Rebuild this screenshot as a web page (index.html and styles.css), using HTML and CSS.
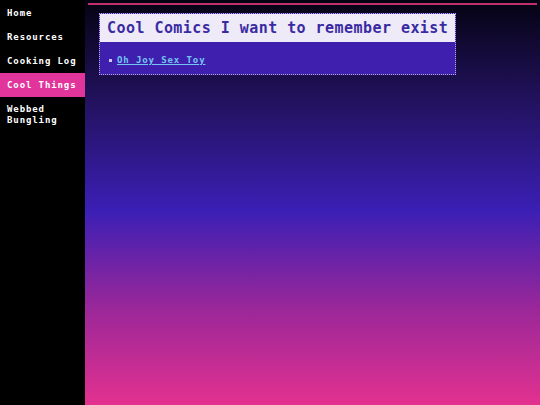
FILE: index.html
```html
<!DOCTYPE html>
<html>
<head>
<meta charset="utf-8">
<link rel="stylesheet" href="styles.css">
</head>
<body>
<nav class="sidebar">
  <a class="nav-item" href="#">Home</a>
  <a class="nav-item" href="#">Resources</a>
  <a class="nav-item" href="#">Cooking Log</a>
  <a class="nav-item active" href="#">Cool Things</a>
  <a class="nav-item" href="#">Webbed Bungling</a>
</nav>
<main class="main">
  <div class="rule-wrap">
    <section class="card">
      <h2 class="card-title">Cool Comics I want to remember exist</h2>
      <ul class="card-list">
        <li><a href="#">Oh Joy Sex Toy</a></li>
      </ul>
    </section>
  </div>
</main>
</body>
</html>
```
FILE: styles.css
```css
html, body {
  margin: 0;
  padding: 0;
  height: 100%;
}
body {
  display: flex;
  min-height: 405px;
  font-family: "DejaVu Sans Mono", "Liberation Mono", monospace;
  background: #000;
}
.sidebar {
  width: 85px;
  flex: none;
  background: #000;
  display: flex;
  flex-direction: column;
  padding-top: 1px;
}
.nav-item {
  display: block;
  color: #fff;
  text-decoration: none;
  font-size: 9px;
  font-weight: bold;
  line-height: 11px;
  letter-spacing: 0.9px;
  padding: 7px 7px 6px;
}
.nav-item.active {
  background: #e1359b;
}
.main {
  flex: 1;
  padding: 3px 3px 0;
  background: linear-gradient(to bottom, #050312 0%, #22125e 25%, #3b1fb5 52%, #9a2799 76%, #e3318f 100%);
}
.rule-wrap {
  border-top: 2px solid #c0306c;
  padding: 8px 0 0 11px;
}
.card {
  display: inline-block;
  border: 1px dotted #b4aade;
  background: #3f20ae;
}
.card-title {
  margin: 0;
  background: #eeeaf8;
  color: #3a2aa2;
  font-size: 15px;
  line-height: 17px;
  letter-spacing: 0.45px;
  font-weight: bold;
  padding: 6px 7px 5px;
}
.card-list {
  list-style: none;
  margin: 0;
  padding: 13px 7px 8px 9px;
}
.card-list li {
  display: flex;
  align-items: center;
  font-size: 9px;
  line-height: 11px;
  letter-spacing: 0.9px;
}
.card-list li::before {
  content: "";
  width: 3px;
  height: 3px;
  background: #d0c8f4;
  margin-right: 5px;
  flex: none;
}
.card-list a {
  color: #72c6f4;
  text-decoration: underline;
  font-weight: bold;
}
```
